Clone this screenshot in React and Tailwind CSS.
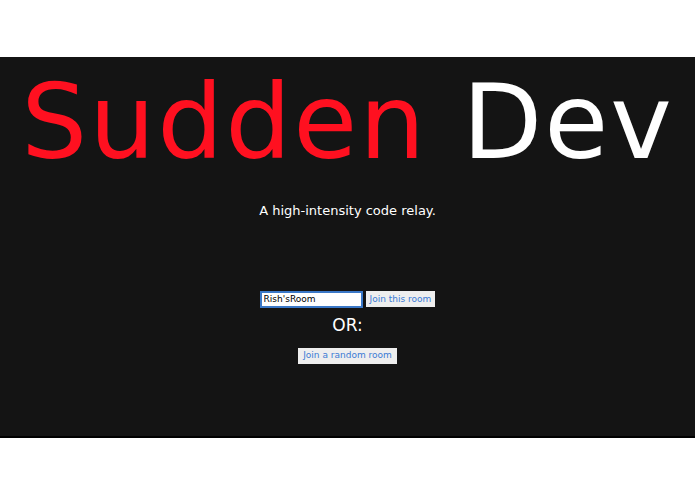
export default function App() {
  return (
    <div className="min-h-screen bg-white pt-[57px]">
      <section className="h-[381px] bg-[#141414] border-b-2 border-black flex flex-col items-center font-['DejaVu_Sans',sans-serif]">
        <h1 className="mt-[13px] text-[104px] leading-none tracking-[2px] whitespace-nowrap">
          <span className="text-[#ff1020]">Sudden</span>{" "}
          <span className="text-white">Dev</span>
        </h1>
        <p className="mt-[27px] text-[13px] text-white">A high-intensity code relay.</p>
        <div className="mt-[70px] flex items-center gap-[3px]">
          <input
            defaultValue="Rish'sRoom"
            className="w-[103px] h-[17px] px-[2px] bg-white text-black text-[9px] border-2 border-[#3b78c7] outline-none"
          />
          <button className="h-[16px] px-[4px] bg-[#eeeeee] text-[#3a7bd5] text-[9px] leading-none">
            Join this room
          </button>
        </div>
        <div className="mt-[9px] text-[17px] text-white leading-none">OR:</div>
        <button className="mt-[14px] h-[16px] px-[5px] bg-[#eeeeee] text-[#3a7bd5] text-[9px] leading-none">
          Join a random room
        </button>
      </section>
    </div>
  );
}
